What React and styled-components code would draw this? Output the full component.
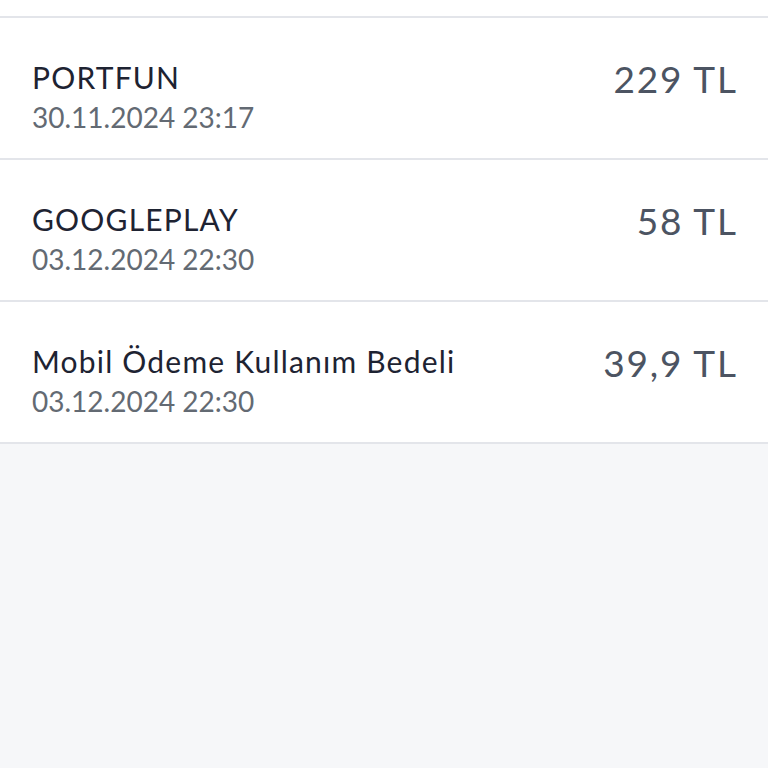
import React from "react";
import styled, { createGlobalStyle } from "styled-components";

const GlobalStyle = createGlobalStyle`
  html, body {
    margin: 0;
    padding: 0;
    background: #f6f7f9;
  }
  body {
    font-family: "Lato", "Open Sans", sans-serif;
  }
`;

const Page = styled.div`
  min-height: 768px;
  background: #f6f7f9;
`;

const List = styled.div`
  display: flex;
  flex-direction: column;
  background: #ffffff;
  padding-top: 16px;
`;

const Row = styled.div`
  display: flex;
  justify-content: space-between;
  align-items: flex-start;
  border-top: 2px solid #e3e5ea;
  padding: 40px 32px 0 32px;
  height: 100px;
  &:last-child {
    border-bottom: 2px solid #e3e5ea;
  }
`;

const Info = styled.div`
  display: flex;
  flex-direction: column;
  gap: 4px;
`;

const Title = styled.div`
  font-size: 30px;
  line-height: 38px;
  letter-spacing: 1.2px;
  color: #1e2332;
`;

const Date = styled.div`
  font-size: 28px;
  line-height: 34px;
  color: #636a73;
`;

const Amount = styled.div`
  font-size: 37px;
  line-height: 42px;
  letter-spacing: 1.8px;
  margin-right: -1.8px;
  color: #4c5462;
`;

const items = [
  { title: "PORTFUN", date: "30.11.2024 23:17", amount: "229 TL" },
  { title: "GOOGLEPLAY", date: "03.12.2024 22:30", amount: "58 TL" },
  { title: "Mobil Ödeme Kullanım Bedeli", date: "03.12.2024 22:30", amount: "39,9 TL" },
];

export default function App() {
  return (
    <Page>
      <GlobalStyle />
      <List>
        {items.map((item, i) => (
          <Row key={i}>
            <Info>
              <Title>{item.title}</Title>
              <Date>{item.date}</Date>
            </Info>
            <Amount>{item.amount}</Amount>
          </Row>
        ))}
      </List>
    </Page>
  );
}
